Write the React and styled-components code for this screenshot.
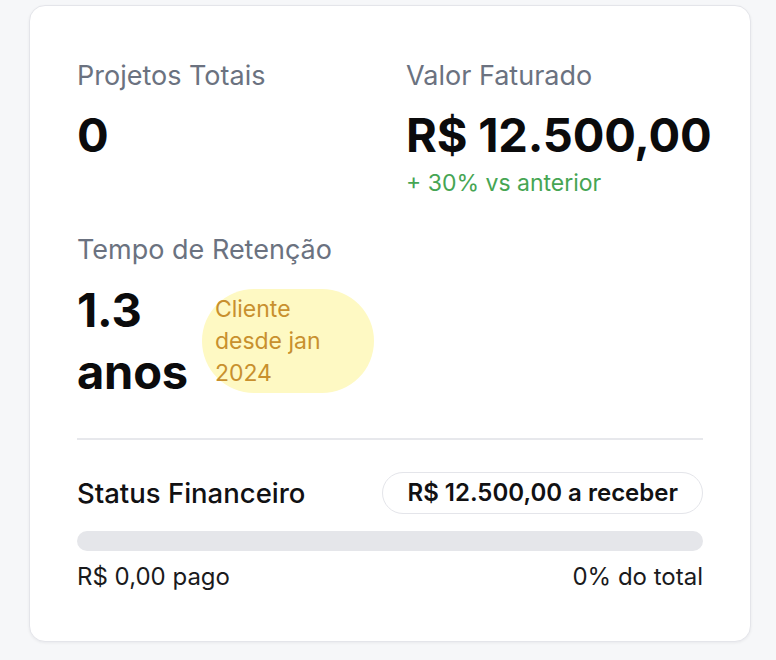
import React from "react";
import styled, { createGlobalStyle } from "styled-components";

const Global = createGlobalStyle`
  html, body { margin: 0; padding: 0; background: #f6f7f9; }
  body { font-family: Inter, "Noto Sans", sans-serif; -webkit-font-smoothing: antialiased; }
  * { box-sizing: border-box; }
`;

const Page = styled.div`
  padding: 5px 25px 20px 29px;
`;

const Card = styled.section`
  width: 722px;
  background: #ffffff;
  border: 1px solid #e4e5ea;
  border-radius: 16px;
  box-shadow: 0 1px 3px rgba(16, 24, 40, 0.06);
  padding: 52px 47px 49px;
`;

const StatGrid = styled.div`
  display: grid;
  grid-template-columns: 1fr 1fr;
  column-gap: 32px;
  row-gap: 34px;
`;

const Stat = styled.div`
  display: flex;
  flex-direction: column;
  min-width: 0;
`;

const Label = styled.div`
  font-size: 27px;
  line-height: 36px;
  color: #6b7280;
  margin-bottom: 11px;
`;

const Value = styled.div`
  font-size: 47px;
  line-height: ${(p) => (p.$stacked ? "62px" : "60px")};
  font-weight: 700;
  color: #0b0b0c;
  letter-spacing: -0.2px;
  white-space: ${(p) => (p.$stacked ? "normal" : "nowrap")};
  ${(p) => p.$stacked && "width: min-content;"}
`;

const Delta = styled.div`
  font-size: 23px;
  line-height: 30px;
  color: #46a553;
  margin-top: 3px;
`;

const ValueRow = styled.div`
  display: flex;
  align-items: center;
  gap: 14px;
`;

const Badge = styled.span`
  flex: 1;
  background: #fef9c3;
  color: #c8902e;
  font-size: 23px;
  line-height: 32px;
  padding: 4px 13px;
  border-radius: 9999px;
`;

const Divider = styled.hr`
  border: none;
  border-top: 2px solid #e7e8ec;
  margin: 35px 0 32px;
`;

const StatusRow = styled.div`
  display: flex;
  align-items: center;
  justify-content: space-between;
`;

const StatusTitle = styled.div`
  font-size: 27.5px;
  font-weight: 500;
  color: #111113;
`;

const Pill = styled.span`
  border: 1.5px solid #e4e5ea;
  border-radius: 9999px;
  padding: 5px 24px;
  font-size: 24px;
  line-height: 30px;
  font-weight: 600;
  color: #111113;
`;

const Track = styled.div`
  height: 20px;
  background: #e5e6ea;
  border-radius: 9999px;
  margin-top: 17px;
  overflow: hidden;
`;

const Fill = styled.div`
  height: 100%;
  background: #22c55e;
  border-radius: 9999px;
`;

const Foot = styled.div`
  display: flex;
  justify-content: space-between;
  margin-top: 11px;
  font-size: 24px;
  line-height: 30px;
  color: #1a1a1c;
`;

export default function App() {
  const paid = 0;
  return (
    <>
      <Global />
      <Page>
        <Card>
          <StatGrid>
            <Stat>
              <Label>Projetos Totais</Label>
              <Value>0</Value>
            </Stat>
            <Stat>
              <Label>Valor Faturado</Label>
              <Value>R$ 12.500,00</Value>
              <Delta>+ 30% vs anterior</Delta>
            </Stat>
            <Stat>
              <Label>Tempo de Retenção</Label>
              <ValueRow>
                <Value $stacked>1.3 anos</Value>
                <Badge>Cliente desde jan 2024</Badge>
              </ValueRow>
            </Stat>
          </StatGrid>
          <Divider />
          <StatusRow>
            <StatusTitle>Status Financeiro</StatusTitle>
            <Pill>R$ 12.500,00 a receber</Pill>
          </StatusRow>
          <Track>
            <Fill style={{ width: `${paid}%` }} />
          </Track>
          <Foot>
            <span>R$ 0,00 pago</span>
            <span>0% do total</span>
          </Foot>
        </Card>
      </Page>
    </>
  );
}
